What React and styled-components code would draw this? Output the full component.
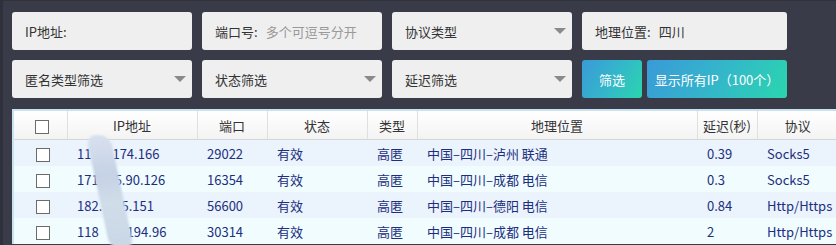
import styled, { createGlobalStyle } from "styled-components";

const GlobalStyle = createGlobalStyle`
  html, body {
    margin: 0;
    padding: 0;
    background: #393c48;
  }
  body {
    font-family: "Noto Sans CJK SC", "Noto Sans", "Liberation Sans", sans-serif;
  }
`;

const Page = styled.div`
  width: 836px;
  height: 245px;
  overflow: hidden;
  background: #393c48;
  border-top: 1px solid #2f323d;
  border-left: 3px solid #2e313c;
  box-sizing: border-box;
  padding: 11px 0 0 9px;
`;

const Filters = styled.div`
  display: flex;
  flex-direction: column;
  gap: 10px;
`;

const Row = styled.div`
  display: flex;
  gap: 10px;
`;

const Field = styled.div`
  width: ${(p) => p.w || 180}px;
  height: 38px;
  box-sizing: border-box;
  background: #efefef;
  border-radius: 3px;
  display: flex;
  align-items: center;
  padding: 0 13px;
  font-size: 13px;
  color: #333;
  position: relative;
`;

const Label = styled.span`
  margin-right: ${(p) => p.gap || 0}px;
`;

const Hint = styled.span`
  color: #999;
`;

const Caret = styled.span`
  position: absolute;
  right: 6px;
  top: 16px;
  width: 0;
  height: 0;
  border-left: 6px solid transparent;
  border-right: 6px solid transparent;
  border-top: 6px solid #8a8a8a;
`;

const Buttons = styled.div`
  display: flex;
  gap: 5px;
`;

const Button = styled.button`
  width: ${(p) => p.w}px;
  height: 38px;
  border: none;
  border-radius: 3px;
  background: linear-gradient(120deg, #3a9ad8 0%, #33b9c8 55%, #2ad6ae 100%);
  color: #fff;
  font-family: inherit;
  font-size: 13px;
  padding: 0;
  cursor: pointer;
`;

const TableWrap = styled.div`
  margin-top: 11px;
  position: relative;
  border: 2px solid #c8e2ef;
  border-right: none;
  border-bottom: none;
  background: #f0fcfe;
  width: 824px;
`;

const Table = styled.table`
  border-collapse: collapse;
  table-layout: fixed;
  width: 100%;
  font-size: 13px;
`;

const Th = styled.th`
  height: 28px;
  padding: 0;
  font-weight: normal;
  color: #333;
  text-align: center;
  background: linear-gradient(#ffffff, #f3f3f3);
  border-bottom: 1px solid #d6d6d6;
  border-right: 1px solid #e0e0e0;
  &:last-child {
    border-right: none;
  }
`;

const Tr = styled.tr`
  background: ${(p) => (p.odd ? "#ebf3fc" : "#f0fcfe")};
`;

const Td = styled.td`
  height: 26px;
  padding: 0 0 0 10px;
  color: #1b2f7e;
  white-space: nowrap;
  overflow: hidden;
  text-align: ${(p) => (p.center ? "center" : "left")};
  ${(p) => p.center && "padding: 0;"}
`;

const Box = styled.span`
  display: inline-block;
  width: 12px;
  height: 12px;
  border: 1px solid #6b6b6b;
  background: #fff;
  vertical-align: middle;
  margin-left: 4px;
`;

const Gap = styled.span`
  display: inline-block;
  width: ${(p) => p.w}px;
`;

const Blur = styled.div`
  position: absolute;
  left: 84px;
  top: 24px;
  width: 24px;
  height: 114px;
  border-radius: 11px;
  background: linear-gradient(175deg, #d8e1ee 0%, #c6d2e6 35%, #d0dde9 60%, #c9d6e6 100%);
  transform: skewX(12deg);
  filter: blur(0.8px);
`;

const cols = [53, 130, 70, 100, 50, 280, 60, 81];
const heads = ["", "IP地址", "端口", "状态", "类型", "地理位置", "延迟(秒)", "协议"];

const rows = [
  [["11", 21, "174.166"], "29022", "有效", "高匿", "中国–四川–泸州 联通", "0.39", "Socks5"],
  [["171", 16, "5.90.126"], "16354", "有效", "高匿", "中国–四川–成都 电信", "0.3", "Socks5"],
  [["182.", 12, "25.151"], "56600", "有效", "高匿", "中国–四川–德阳 电信", "0.84", "Http/Https"],
  [["118", 28, "194.96"], "30314", "有效", "高匿", "中国–四川–成都 电信", "2", "Http/Https"],
];

const App = () => {
  return (
    <Page>
      <GlobalStyle />
      <Filters>
        <Row>
          <Field>
            <Label>IP地址:</Label>
          </Field>
          <Field>
            <Label gap={8}>端口号:</Label>
            <Hint>多个可逗号分开</Hint>
          </Field>
          <Field>
            协议类型
            <Caret />
          </Field>
          <Field w={205}>
            <Label gap={8}>地理位置:</Label>四川
          </Field>
        </Row>
        <Row>
          <Field>
            匿名类型筛选
            <Caret />
          </Field>
          <Field>
            状态筛选
            <Caret />
          </Field>
          <Field>
            延迟筛选
            <Caret />
          </Field>
          <Buttons>
            <Button w={60}>筛选</Button>
            <Button w={140}>显示所有IP（100个）</Button>
          </Buttons>
        </Row>
      </Filters>
      <TableWrap>
        <Table>
          <colgroup>
            {cols.map((w, i) => (
              <col key={i} style={{ width: w }} />
            ))}
          </colgroup>
          <thead>
            <tr>
              {heads.map((h, i) => (
                <Th key={i}>{i === 0 ? <Box /> : h}</Th>
              ))}
            </tr>
          </thead>
          <tbody>
            {rows.map(([ip, ...rest], i) => (
              <Tr key={i} odd={i % 2 === 0}>
                <Td center>
                  <Box />
                </Td>
                <Td>
                  {ip[0]}
                  <Gap w={ip[1]} />
                  {ip[2]}
                </Td>
                {rest.map((c, j) => (
                  <Td key={j}>{c}</Td>
                ))}
              </Tr>
            ))}
          </tbody>
        </Table>
        <Blur />
      </TableWrap>
    </Page>
  );
};

export default App;
